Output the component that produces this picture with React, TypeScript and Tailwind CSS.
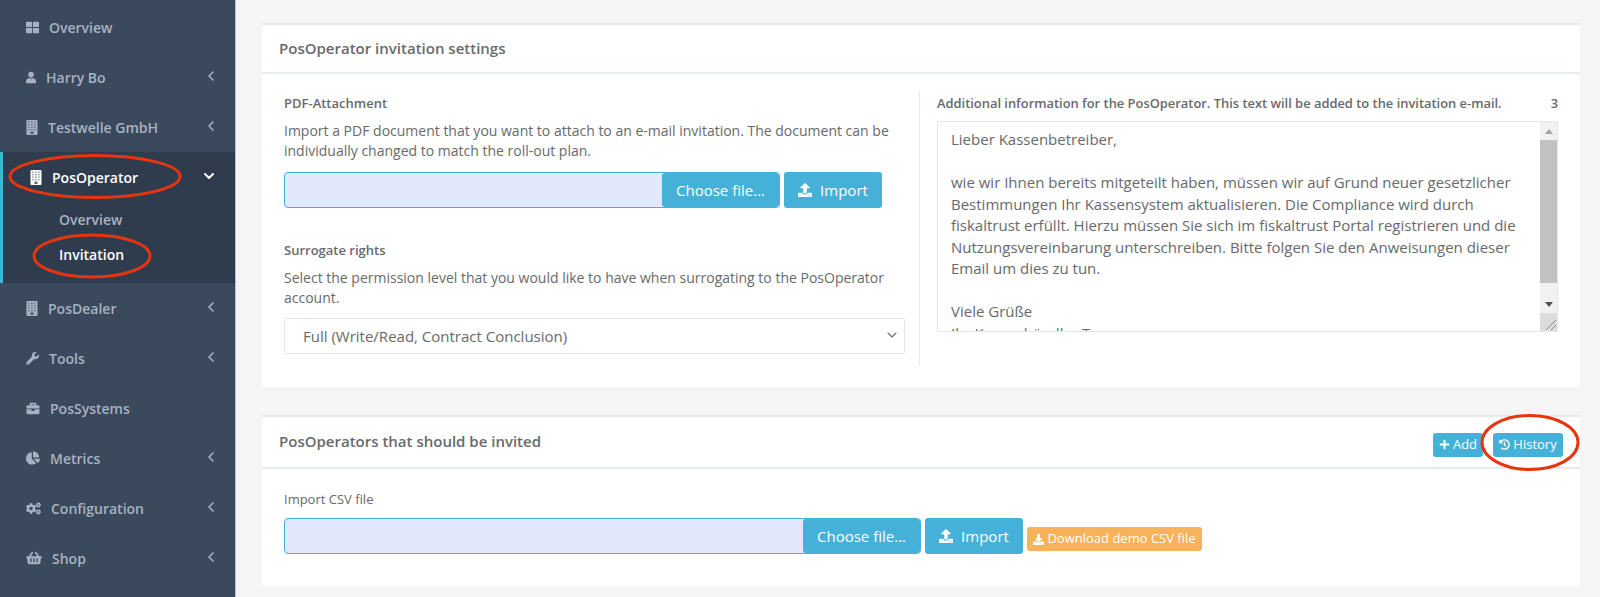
import type { ReactNode } from 'react';
import type { IconType } from 'react-icons';
import { ChevronDown, ChevronLeft } from 'lucide-react';
import {
  FaBriefcase,
  FaChartPie,
  FaCogs,
  FaDownload,
  FaHistory,
  FaPlus,
  FaShoppingBasket,
  FaThLarge,
  FaUpload,
  FaUser,
  FaWrench,
} from 'react-icons/fa';

type NavEntry = {
  label: string;
  icon: (props: { className?: string }) => ReactNode;
  iconClass: string;
  arrow?: boolean;
};

/** FA4 style building: solid block with a grid of windows and a door */
function BuildingIcon({ className }: { className?: string }) {
  const windows = [1.5, 4, 6.5, 9];
  return (
    <svg viewBox="0 0 12 15" className={className}>
      <rect x="0.5" width="11" height="15" rx="0.8" fill="currentColor" />
      {windows.map((y) =>
        [2, 5, 8].map((x) => <rect key={`${x}-${y}`} x={x} y={y} width="1.6" height="1.4" fill="#3a4a5c" opacity="0.55" />),
      )}
      <rect x="4.5" y="11.5" width="3" height="2.5" fill="#3a4a5c" opacity="0.8" />
    </svg>
  );
}

const NAV_TOP: NavEntry[] = [
  { label: 'Overview', icon: FaThLarge, iconClass: 'w-[13px] h-[13px]' },
  { label: 'Harry Bo', icon: FaUser, iconClass: 'w-[10px] h-[13px]', arrow: true },
  { label: 'Testwelle GmbH', icon: BuildingIcon, iconClass: 'w-[12px] h-[15px]', arrow: true },
];

const NAV_BOTTOM: NavEntry[] = [
  { label: 'PosDealer', icon: BuildingIcon, iconClass: 'w-[12px] h-[15px]', arrow: true },
  { label: 'Tools', icon: FaWrench, iconClass: 'w-[13px] h-[13px]', arrow: true },
  { label: 'PosSystems', icon: FaBriefcase, iconClass: 'w-[14px] h-[13px]' },
  { label: 'Metrics', icon: FaChartPie, iconClass: 'w-[14px] h-[14px]', arrow: true },
  { label: 'Configuration', icon: FaCogs, iconClass: 'w-[15px] h-[13px]', arrow: true },
  { label: 'Shop', icon: FaShoppingBasket, iconClass: 'w-[16px] h-[14px]', arrow: true },
];

const LETTER = `Lieber Kassenbetreiber,

wie wir Ihnen bereits mitgeteilt haben, müssen wir auf Grund neuer gesetzlicher Bestimmungen Ihr Kassensystem aktualisieren. Die Compliance wird durch fiskaltrust erfüllt. Hierzu müssen Sie sich im fiskaltrust Portal registrieren und die Nutzungsvereinbarung unterschreiben. Bitte folgen Sie den Anweisungen dieser Email um dies zu tun.

Viele Grüße
Ihr Kassenhändler Team`;

function NavItem({ item }: { item: NavEntry }) {
  const Icon = item.icon;
  return (
    <a className="flex h-[50px] items-center gap-[10px] pl-[26px] pr-[16px] text-[14px] font-semibold text-[#a7b1c2]">
      <Icon className={item.iconClass} />
      <span className="flex-1">{item.label}</span>
      {item.arrow && <ChevronLeft size={16} strokeWidth={2.4} className="mb-[2px]" />}
    </a>
  );
}

function Sidebar() {
  return (
    <nav className="h-full w-[236px] shrink-0 border-r border-[#b9c3cd] bg-[#3a4a5c] pt-[2px]">
      {NAV_TOP.map((item) => (
        <NavItem key={item.label} item={item} />
      ))}
      {/* Open section */}
      <div className="h-[131px] border-l-[3px] border-[#3db4da] bg-[#2f3c4d]">
        <a className="flex h-[50px] items-center gap-[10px] pl-[27px] pr-[18px] text-[14px] font-semibold text-white">
          <BuildingIcon className="h-[15px] w-[12px]" />
          <span className="flex-1">PosOperator</span>
          <ChevronDown size={16} strokeWidth={3} className="mb-[3px]" />
        </a>
        <div className="pl-[56px] text-[14px] font-semibold">
          <div className="flex h-[35px] items-center pb-[1px] text-[#a7b1c2]">Overview</div>
          <div className="flex h-[35px] items-center text-white">Invitation</div>
        </div>
      </div>
      {NAV_BOTTOM.map((item) => (
        <NavItem key={item.label} item={item} />
      ))}
    </nav>
  );
}

function Card({
  title,
  headerClass,
  actions,
  children,
}: {
  title: string;
  headerClass: string;
  actions?: ReactNode;
  children: ReactNode;
}) {
  return (
    <section className="border-t-2 border-[#e7eaec] bg-white">
      <header className={`flex items-center justify-between border-b-2 border-[#e7eaec] px-[17px] ${headerClass}`}>
        <h2 className="text-[15px] font-semibold text-[#676a6c]">{title}</h2>
        {actions}
      </header>
      {children}
    </section>
  );
}

function FileInput({ width }: { width: string }) {
  return (
    <div className="flex h-[36px] items-stretch gap-[4px]">
      <div className={`flex ${width} overflow-hidden rounded-[4px] border border-[#46b1d8] bg-[#e3e7fc]`}>
        <div className="flex-1" />
        <button className="w-[117px] rounded-[3px] bg-[#46b1d8] text-[15px] text-white">Choose file...</button>
      </div>
      <button className="flex w-[98px] items-center justify-center gap-[8px] rounded-[3px] bg-[#46b1d8] text-[15px] text-white">
        <FaUpload className="h-[14px] w-[14px]" />
        Import
      </button>
    </div>
  );
}

function SmallButton({ icon: Icon, label, className }: { icon: IconType; label: string; className: string }) {
  return (
    <button className={`flex h-[24px] items-center justify-center gap-[3px] rounded-[3px] bg-[#46b1d8] text-[13px] text-white ${className}`}>
      <Icon className="h-[11px] w-[11px]" />
      {label}
    </button>
  );
}

/** The native scrollbar and resize corner, which the headless browser doesn't paint */
function FakeScrollbar() {
  return (
    <div className="absolute bottom-[1px] right-[1px] top-[1px] flex w-[17px] flex-col items-center bg-[#f1f1f1]">
      <div className="flex h-[18px] items-center justify-center">
        <div className="h-0 w-0 border-x-[4px] border-b-[5px] border-x-transparent border-b-[#a3a3a3]" />
      </div>
      <div className="h-[143px] w-full bg-[#c1c1c1]" />
      <div className="flex h-[30px] items-end justify-center pb-[6px]">
        <div className="h-0 w-0 border-x-[4px] border-t-[5px] border-x-transparent border-t-[#505050]" />
      </div>
      <div className="relative w-full flex-1 bg-[#dcdcdc]">
        <svg viewBox="0 0 17 18" className="absolute inset-0 h-full w-full" stroke="#8a8a8a" strokeWidth="1">
          <path d="M6 17 16 7M11 17 16 12" />
        </svg>
      </div>
    </div>
  );
}

function Annotations() {
  return (
    <svg className="pointer-events-none absolute inset-0 h-full w-full" fill="none" stroke="#e8340f" strokeWidth="3">
      <ellipse cx="95" cy="176.5" rx="85" ry="21" />
      <ellipse cx="92" cy="256" rx="58" ry="21" />
      <ellipse cx="1530" cy="442.5" rx="48" ry="27" />
    </svg>
  );
}

export default function App() {
  return (
    <div className="relative flex h-[597px] w-[1600px] overflow-hidden bg-[#f5f5f5] font-['Open_Sans',sans-serif] text-[14px] text-[#676a6c]">
      <Sidebar />
      <main className="flex flex-1 flex-col gap-[28px] pl-[26px] pr-[20px] pt-[23px]">
        <Card title="PosOperator invitation settings" headerClass="h-[49px]">
          <div className="flex h-[313px] px-[22px] pt-[17px]">
            <div className="w-[636px] pr-[15px] pt-[2px]">
              <h3 className="mb-[8px] h-[20px] text-[13px] font-semibold leading-[20px]">PDF-Attachment</h3>
              <p className="mb-[11px] leading-[20px]">
                Import a PDF document that you want to attach to an e-mail invitation. The document can be individually
                changed to match the roll-out plan.
              </p>
              <FileInput width="w-[496px]" />
              <h3 className="mb-[8px] mt-[32px] h-[20px] text-[13px] font-semibold leading-[20px]">Surrogate rights</h3>
              <p className="mb-[10px] leading-[20px]">
                Select the permission level that you would like to have when surrogating to the PosOperator account.
              </p>
              <div className="relative w-[621px]">
                <select className="h-[36px] w-full appearance-none rounded-[1px] border border-[#e5e6e7] bg-white pl-[18px] text-[15px] text-[#676a6c]">
                  <option>Full (Write/Read, Contract Conclusion)</option>
                </select>
                <ChevronDown size={16} strokeWidth={1.6} className="absolute right-[5px] top-[9px] text-[#676a6c]" />
              </div>
            </div>
            <div className="ml-[-1px] h-[275px] border-l border-[#e7eaec] pl-[17px] pt-[2px]">
              <div className="mb-[8px] flex h-[20px] w-[621px] justify-between text-[12.9px] font-semibold leading-[20px]">
                <span>Additional information for the PosOperator. This text will be added to the invitation e-mail.</span>
                <span>3</span>
              </div>
              <div className="relative">
                <textarea
                  readOnly
                  value={LETTER}
                  className="block h-[211px] w-[621px] resize-none overflow-hidden rounded-[1px] border border-[#e5e6e7] py-[7px] pl-[13px] pr-[29px] text-[15px] leading-[21.5px] text-[#676a6c]"
                />
                <FakeScrollbar />
              </div>
            </div>
          </div>
        </Card>
        <Card
          title="PosOperators that should be invited"
          headerClass="h-[52px] pb-[2px]"
          actions={
            <div className="mt-[7px] flex gap-[10px]">
              <SmallButton icon={FaPlus} label="Add" className="w-[50px]" />
              <SmallButton icon={FaHistory} label="History" className="w-[70px]" />
            </div>
          }
        >
          <div className="h-[117px] pl-[22px] pt-[20px]">
            <h3 className="mb-[9px] h-[20px] text-[13px] leading-[20px] text-[#676a6c]">Import CSV file</h3>
            <div className="flex items-center gap-[4px]">
              <FileInput width="w-[637px]" />
              <button className="mt-[6px] flex h-[24px] w-[175px] items-center justify-center gap-[3px] rounded-[3px] bg-[#f8b25a] text-[13px] text-white">
                <FaDownload className="h-[11px] w-[11px]" />
                Download demo CSV file
              </button>
            </div>
          </div>
        </Card>
      </main>
      <Annotations />
    </div>
  );
}
